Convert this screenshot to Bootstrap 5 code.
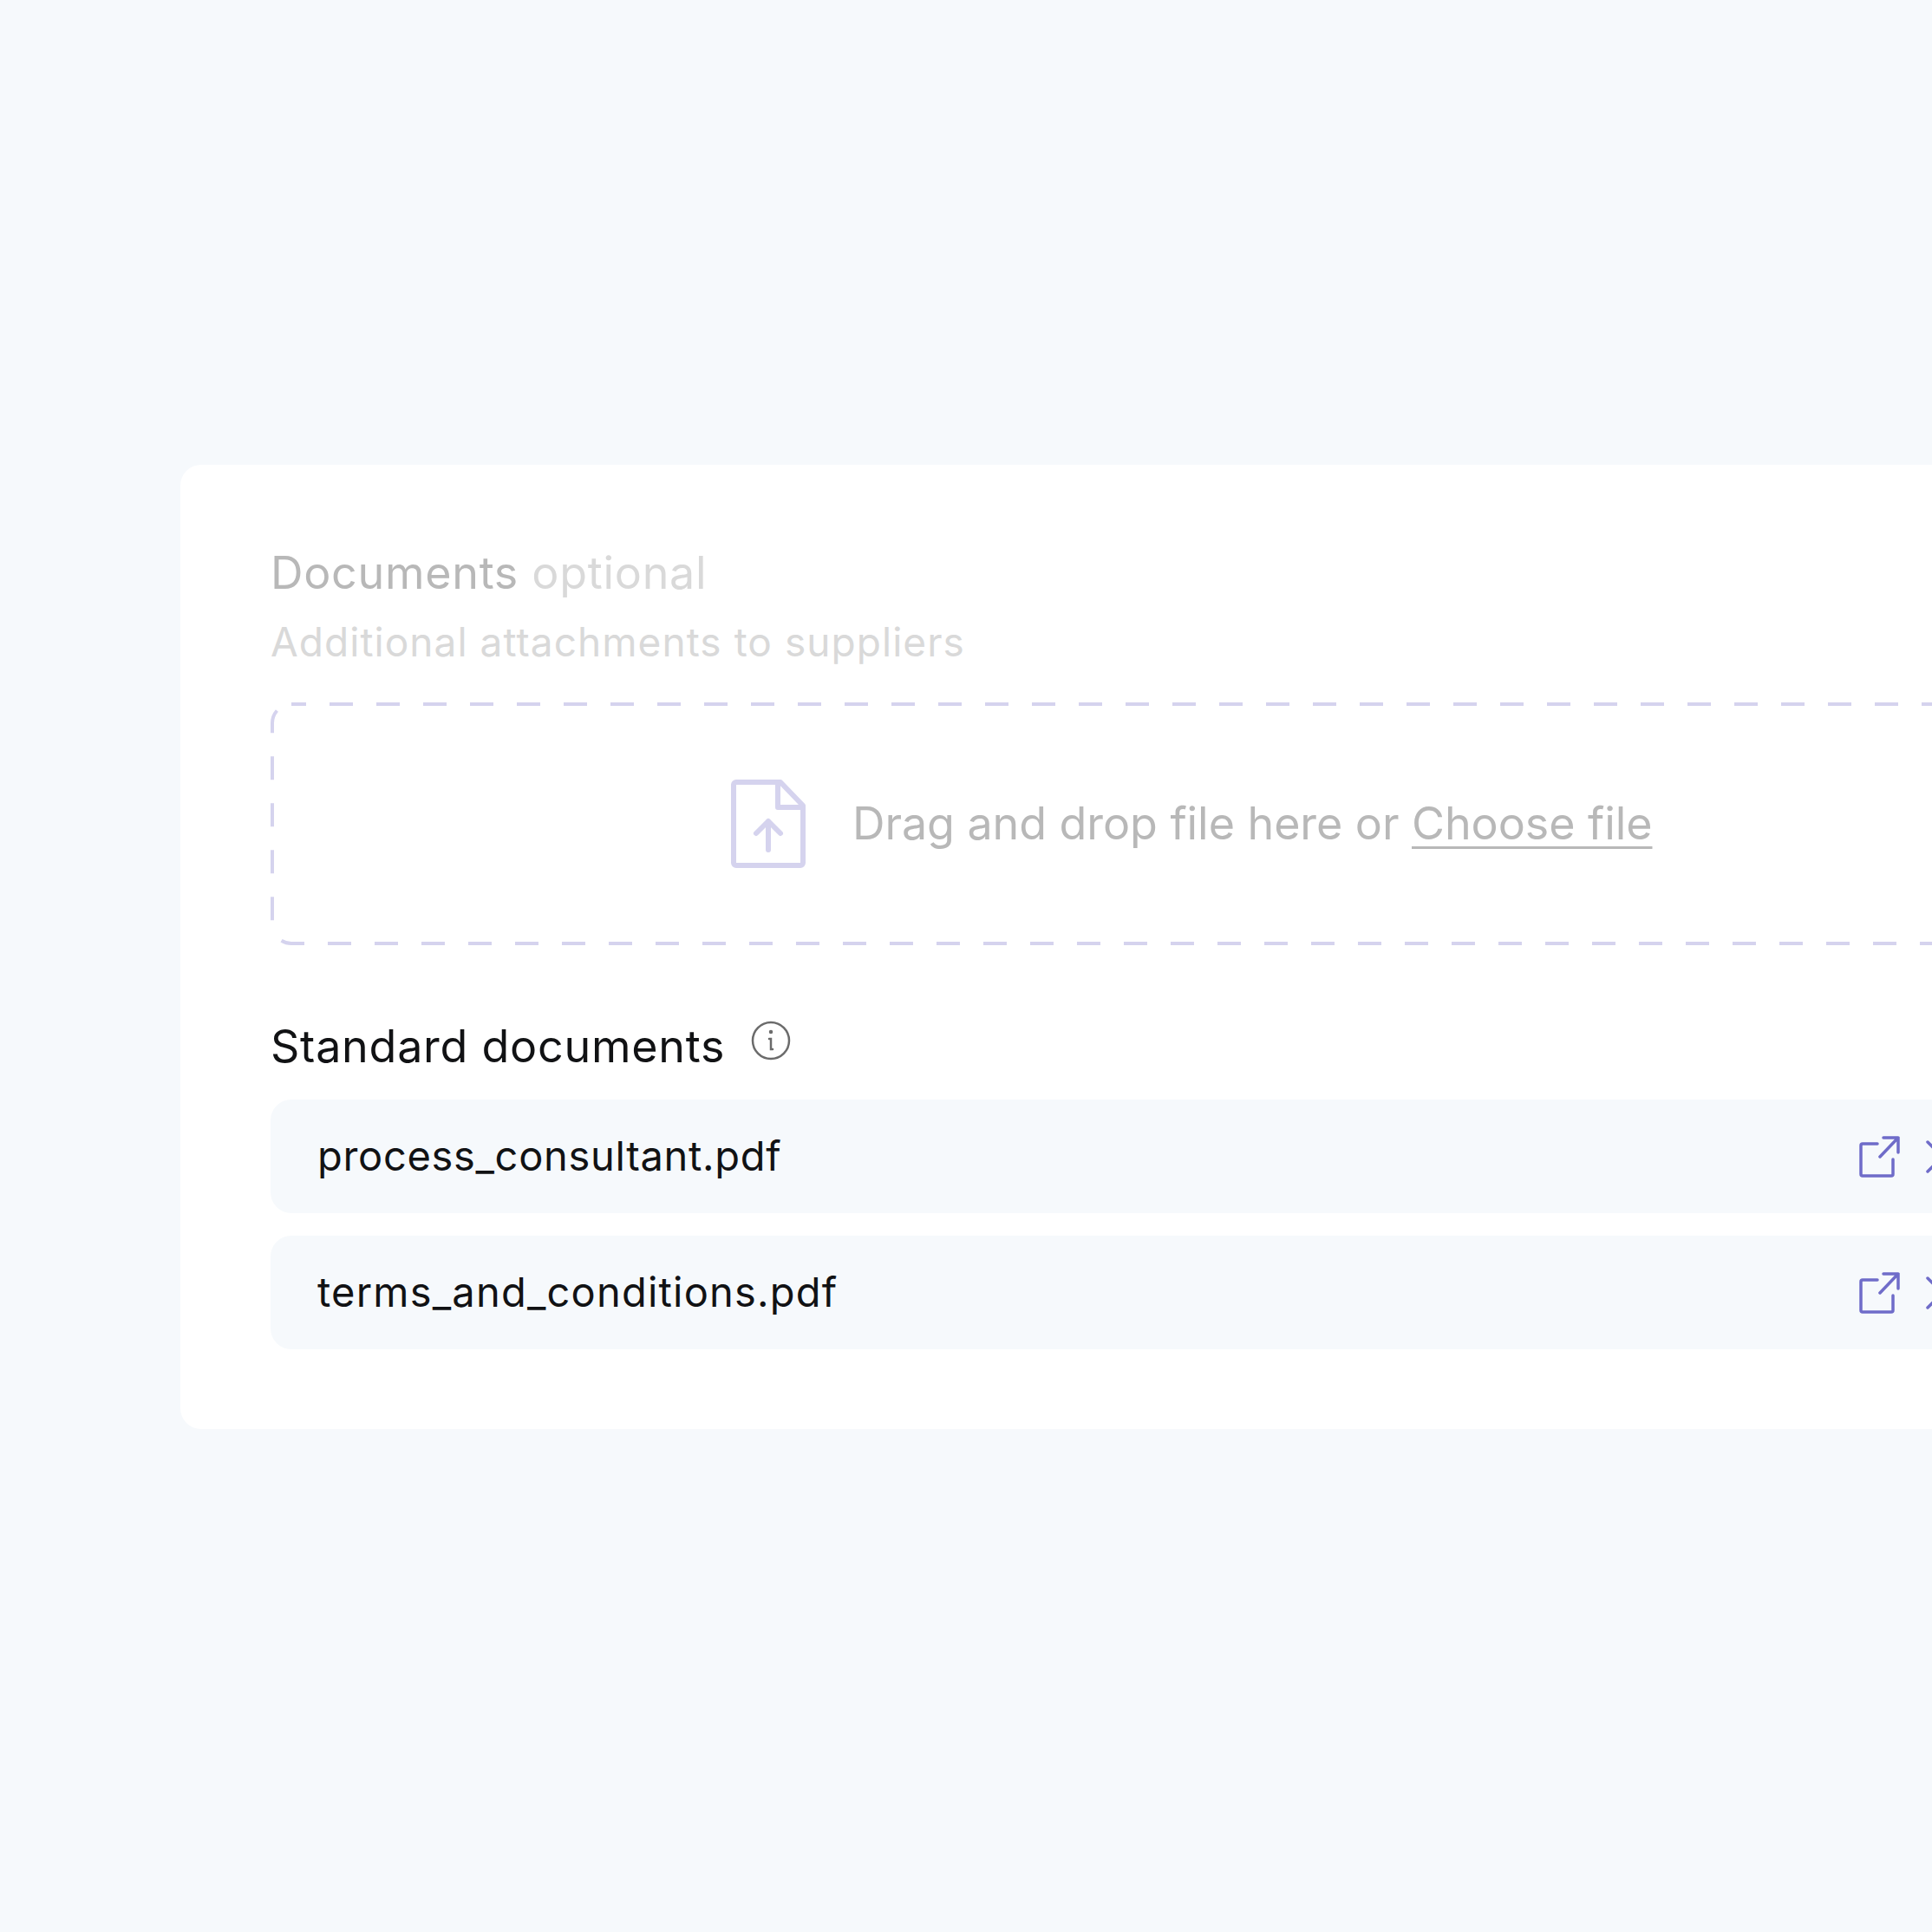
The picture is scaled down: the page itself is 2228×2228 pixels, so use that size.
<!DOCTYPE html>
<html lang="en">
<head>
    <meta charset="UTF-8">
    <title>Documents</title>
    <link href="https://cdn.jsdelivr.net/npm/bootstrap@5.3.0/dist/css/bootstrap.min.css" rel="stylesheet">
    <style>
        body {
            background: #f6f9fc;
            font-family: Inter, "Liberation Sans", sans-serif;
            overflow: hidden;
            height: 2228px;
        }
        .page-wrap {
            padding: 536px 0 0 208px;
            width: 2500px;
        }
        .doc-card {
            background: #fff;
            border-radius: 24px;
            width: 2214px;
            height: 1112px;
            padding: 95px 104px 0;
        }
        .doc-title {
            font-size: 52px;
            line-height: 60px;
            color: #b8b8b8;
            letter-spacing: .7px;
        }
        .doc-title span { color: #d9d9d9; }
        .doc-sub {
            font-size: 46px;
            line-height: 54px;
            letter-spacing: 1.05px;
            color: #d9d9d9;
            margin-top: 22px;
        }
        .drop-zone {
            height: 280px;
            margin-top: 43px;
            padding-left: 530px;
            color: #b8b8b8;
            font-size: 52px;
            letter-spacing: -.07px;
        }
        .dash-line {
            top: 0;
            left: 0;
        }
        .drop-text { margin-left: 53px; }
        .drop-zone a { color: #b8b8b8; text-underline-offset: 8px; text-decoration-thickness: 3px; }
        .std-head {
            margin-top: 87px;
            font-size: 52px;
            line-height: 60px;
            letter-spacing: .75px;
            color: #111214;
        }
        .info-icon { margin-left: 30px; margin-bottom: 14px; }
        .file-row {
            background: #f6f9fc;
            border-radius: 24px;
            height: 131px;
            padding: 0 54px;
            margin-top: 31px;
            font-size: 47px;
            letter-spacing: .68px;
            color: #111214;
        }
        .file-row + .file-row { margin-top: 26px; letter-spacing: 1.2px; }
        .row-actions { gap: 25px; }
    </style>
</head>
<body>
    <div class="page-wrap">
        <div class="doc-card">
            <div class="doc-title">Documents <span>optional</span></div>
            <div class="doc-sub">Additional attachments to suppliers</div>
            <div class="drop-zone position-relative d-flex align-items-center">
                <svg class="dash-line position-absolute" width="2006" height="280" fill="none"><rect x="2" y="2" width="2002.15" height="276" rx="22" stroke="#d5d3ee" stroke-width="4" stroke-dasharray="27 27" stroke-dashoffset="10"/></svg>
                <svg width="88" height="104" viewBox="0 0 88 104" fill="none" stroke="#d5d3ee" stroke-width="6" stroke-linecap="round" stroke-linejoin="round"><path d="M4 7a3 3 0 0 1 3-3h51l26 27v66a3 3 0 0 1-3 3H7a3 3 0 0 1-3-3z"/><path d="M55 4v29h29"/><path d="M44 82V49M30 63l14-14 14 14"/></svg>
                <div class="drop-text">Drag and drop file here or <a href="#">Choose file</a></div>
            </div>
            <div class="std-head d-flex align-items-center">Standard documents
                <svg class="info-icon" width="46" height="46" viewBox="0 0 46 46" fill="none" stroke="#6b6b6b" stroke-width="2.5" stroke-linecap="round"><circle cx="23" cy="23" r="21"/><path d="M21 21h2v12h2"/><circle cx="23" cy="13" r="1" fill="#6b6b6b"/></svg>
            </div>
            <div class="file-row d-flex align-items-center justify-content-between">
                <span>process_consultant.pdf</span>
                <div class="row-actions d-flex align-items-center">
                    <svg width="48" height="48" viewBox="0 0 48 48" fill="none" stroke="#6f6cc9" stroke-width="3.5" stroke-linecap="round" stroke-linejoin="round"><path d="M22 9H5a2 2 0 0 0-2 2v33a2 2 0 0 0 2 2h33a2 2 0 0 0 2-2V27"/><path d="M29 2h17v17M46 2 25 24"/></svg>
                    <svg width="48" height="48" viewBox="0 0 48 48" fill="none" stroke="#6f6cc9" stroke-width="3.5" stroke-linecap="round"><path d="M7 7l34 34M41 7 7 41"/></svg>
                </div>
            </div>
            <div class="file-row d-flex align-items-center justify-content-between">
                <span>terms_and_conditions.pdf</span>
                <div class="row-actions d-flex align-items-center">
                    <svg width="48" height="48" viewBox="0 0 48 48" fill="none" stroke="#6f6cc9" stroke-width="3.5" stroke-linecap="round" stroke-linejoin="round"><path d="M22 9H5a2 2 0 0 0-2 2v33a2 2 0 0 0 2 2h33a2 2 0 0 0 2-2V27"/><path d="M29 2h17v17M46 2 25 24"/></svg>
                    <svg width="48" height="48" viewBox="0 0 48 48" fill="none" stroke="#6f6cc9" stroke-width="3.5" stroke-linecap="round"><path d="M7 7l34 34M41 7 7 41"/></svg>
                </div>
            </div>
        </div>
    </div>
</body>
</html>
